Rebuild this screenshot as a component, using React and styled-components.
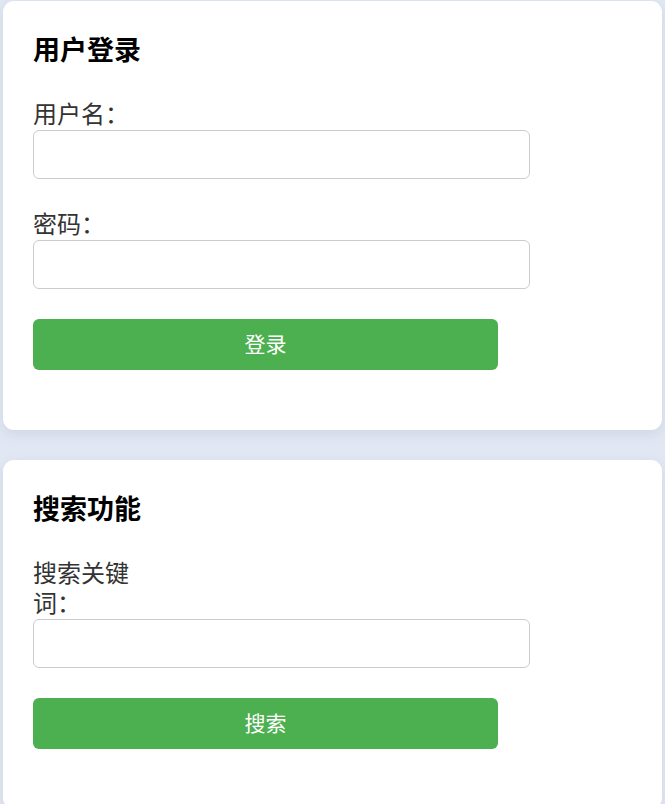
import React from 'react'
import styled, { createGlobalStyle } from 'styled-components'

const GlobalStyle = createGlobalStyle`
    html, body {
        margin: 0;
        padding: 0;
        background: #e2e8f3;
        font-family: "Liberation Sans", "Noto Sans CJK SC", sans-serif;
    }
`;

const Page = styled.div`
    padding: 1px 3px 30px 3px;
    display: flex;
    flex-direction: column;
    gap: 30px;
`;

const Card = styled.section`
    background: #ffffff;
    border-radius: 11px;
    padding: 30px;
    box-shadow: 0 4px 14px rgba(60, 80, 130, 0.12);
`;

const Title = styled.h2`
    margin: 0 0 29px 0;
    font-size: 27px;
    line-height: 40px;
    font-weight: 700;
    color: #000;
`;

const Field = styled.div`
    margin-bottom: ${props => props.last ? "30px" : "31px"};
`;

const Label = styled.label`
    display: block;
    width: 100px;
    font-size: 24px;
    line-height: 30px;
    color: #333;
`;

const Input = styled.input`
    display: block;
    box-sizing: border-box;
    width: 497px;
    height: 49px;
    margin: 0;
    border: 1px solid #cccccc;
    border-radius: 6px;
    padding: 0 12px;
    font-size: 20px;
    outline: none;
`;

const Button = styled.button`
    display: block;
    width: 465px;
    height: 51px;
    margin: 0 0 30px 0;
    padding: 0 0 3px 0;
    border: none;
    border-radius: 6px;
    background: #4caf50;
    color: #fff;
    font-family: "Liberation Sans", "Noto Sans CJK SC", sans-serif;
    font-size: 21px;
    cursor: pointer;
`;

function App() {
    return (
        <Page>
            <GlobalStyle />
            <Card>
                <Title>用户登录</Title>
                <Field>
                    <Label htmlFor="username">用户名：</Label>
                    <Input id="username" type="text" />
                </Field>
                <Field last>
                    <Label htmlFor="password">密码：</Label>
                    <Input id="password" type="password" />
                </Field>
                <Button>登录</Button>
            </Card>

            <Card>
                <Title>搜索功能</Title>
                <Field last>
                    <Label htmlFor="keyword">搜索关键词：</Label>
                    <Input id="keyword" type="text" />
                </Field>
                <Button>搜索</Button>
            </Card>
        </Page>
    )
}

export default App
